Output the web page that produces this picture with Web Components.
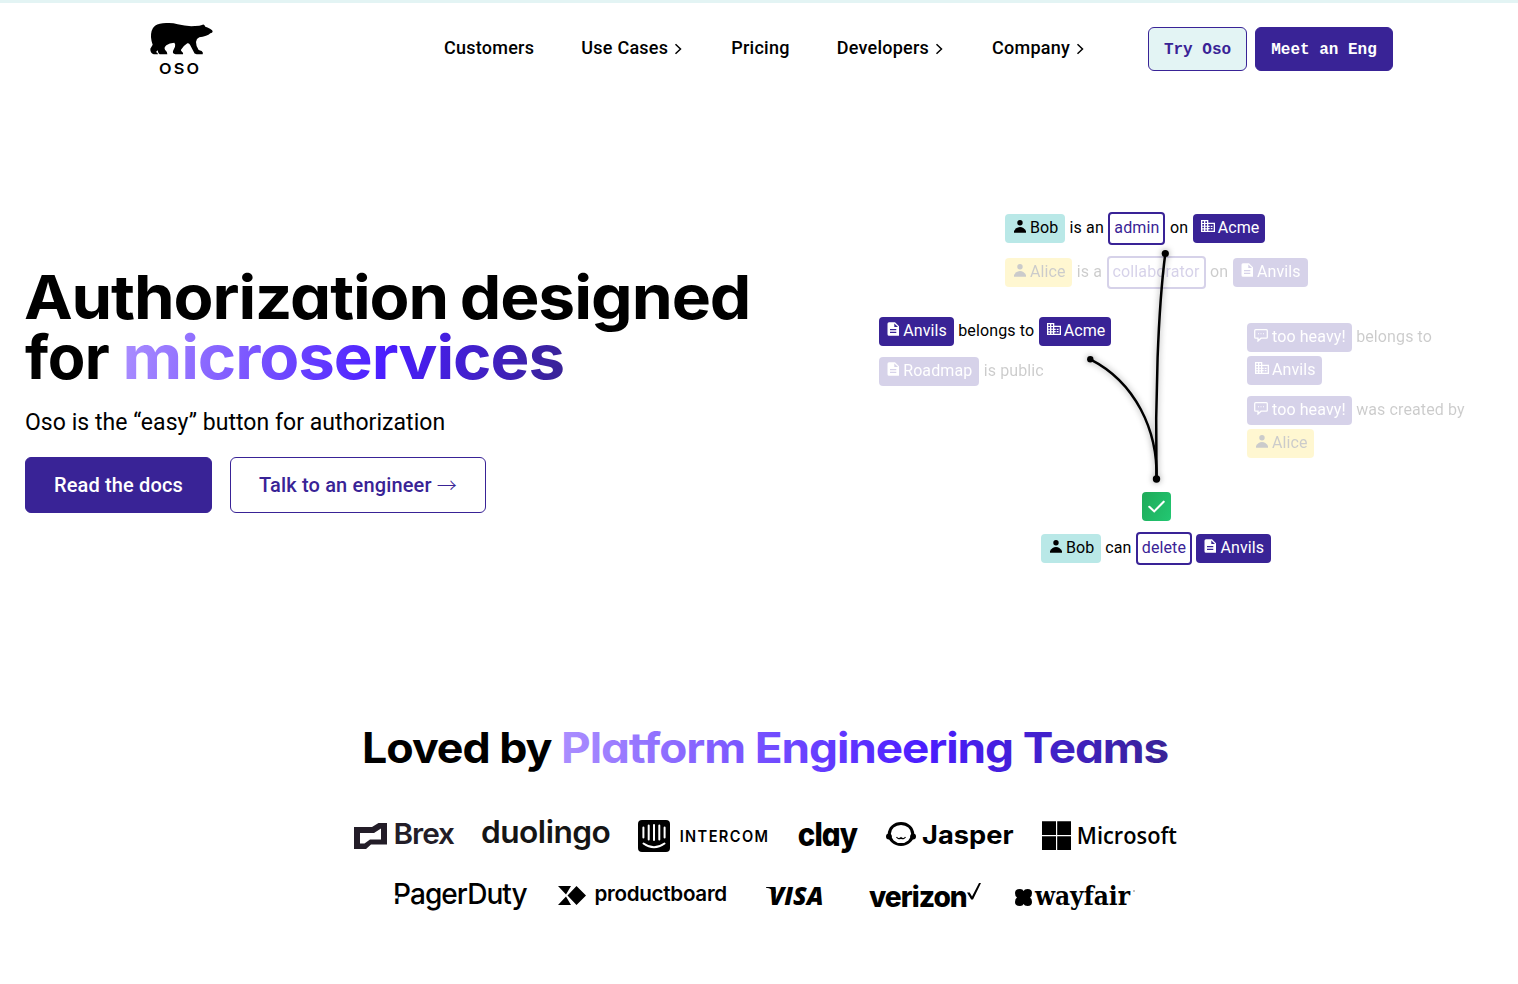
<!DOCTYPE html>
<html lang="en">
<head>
<meta charset="utf-8">
<title>Oso</title>
<style>
body{margin:0;background:#fff;font-family:Roboto,sans-serif;color:#000;height:984px;overflow:hidden}
</style>
</head>
<body>
<oso-page></oso-page>
<script>
const def=(name,html,ready)=>{
  const t=document.createElement('template');t.innerHTML=html;
  customElements.define(name,class extends HTMLElement{
    constructor(){super();this.attachShadow({mode:'open'}).append(t.content.cloneNode(true));}
    connectedCallback(){ready&&ready(this,this.shadowRoot);}
  });
};

// One line of display type whose ink spans exactly `w` pixels, with its baseline at `b`.
customElements.define('fit-text',class extends HTMLElement{
  constructor(){super();this.attachShadow({mode:'open'});}
  connectedCallback(){
    const a=(k,d)=>this.getAttribute(k)||d;
    const w=+a('w'),h=+a('h','40'),b=+a('b'),dx=+a('dx','0'),size=+a('size'),weight=a('weight','700'),ls=a('ls','0'),
      fam=a('font','Inter'),style=a('fstyle','normal'),text=a('text','');
    const g=this.hasAttribute('gradient');
    this.shadowRoot.innerHTML=`<style>:host{display:block;flex:none;width:${w}px;height:${h}px}svg{display:block;overflow:visible}
    text{font:${style} ${weight} ${size}px "${fam}",sans-serif;letter-spacing:${ls}px;white-space:pre;font-feature-settings:${this.hasAttribute('round')?'"cv11"':'normal'}}</style>
    <svg width="${w}" height="${h}">${g?`<defs><linearGradient id="g" gradientUnits="userSpaceOnUse"><stop offset="0" stop-color="#ab8fff"/><stop offset=".6" stop-color="#4a1dff"/><stop offset="1" stop-color="#392396"/></linearGradient></defs>`:''}
    <text fill="${g?'url(#g)':'currentColor'}"></text></svg>`;
    const t=this.shadowRoot.querySelector('text');t.textContent=text;
    const c=document.createElement('canvas').getContext('2d');
    c.font=`${style} ${weight} ${size}px "${fam}"`;c.letterSpacing=ls+'px';
    const m=c.measureText(text),l=-m.actualBoundingBoxLeft;
    // the alternate single-storey "a" changes the advance, which the canvas does not know
    const extra=(t.getComputedTextLength()||m.width)-m.width;
    const W=m.actualBoundingBoxRight-l+extra,s=w/W;
    t.setAttribute('transform',`translate(${dx-l*s} ${b}) scale(${s} 1)`);
    if(g){const H=size*1.2,q=this.shadowRoot.querySelector('linearGradient'),y=-size*.3;
      q.setAttribute('x1',0);q.setAttribute('x2',W);q.setAttribute('y1',y-H*.5);q.setAttribute('y2',y+H*.5);}
  }
});

def('nav-item',`<style>:host{display:flex;align-items:center;font:500 18px/24px Roboto,sans-serif;letter-spacing:.25px;white-space:nowrap}
svg{display:none;margin:2px 0 0 5px}:host([menu]) svg{display:block}</style>
<slot></slot><svg width="11" height="12" viewBox="0 0 11 12"><path d="M2.500 1.2 7.500 6 2.500 10.8" fill="none" stroke="#000" stroke-width="1.5"/></svg>`);

def('cta-button',`<style>:host{display:flex;box-sizing:border-box;align-items:center;justify-content:center;white-space:pre;border:1px solid #392396;border-radius:6px;background:#392396;color:#fff;font:500 20px/24px Roboto,sans-serif;letter-spacing:.15px;height:56px}
:host([mono]){font:700 16px/20px "Liberation Mono",monospace;letter-spacing:0;height:44px;padding-top:2px}
:host([light]){background:#e3f4f4;color:#392396}:host([outline]){background:#fff;color:#392396}
::slotted(span){font:300 20px/24px "Noto Sans CJK JP",sans-serif}</style><slot></slot>`);

def('site-header',`<style>:host{display:flex;box-sizing:border-box;height:96px;border-top:3px solid #e3f4f4;padding-left:148px}
.logo{width:67px;margin-top:17px;display:flex;flex-direction:column}.logo svg{display:block}
fit-text{margin-left:10.500px}
nav{display:flex;gap:47px;margin:33px 0 0 229px;height:24px;width:704px}
.b{display:flex;gap:8px;margin-top:24px}
</style>
<div class="logo"><svg width="67" height="38" viewBox="24 60 201 114"><path d="M218 95Q217 99 211 100Q206 106 198 107Q188 111 178 112Q169 116 168 126Q168 140 176 150L185 153Q191 158 188 163H170Q162 162 161 155L150 134Q147 128 142 130Q131 137 123 149Q122 152 126 155Q131 159 129 163H106Q97 161 99 153L105 140Q107 133 103 128Q88 128 79 136Q71 143 75 149Q83 156 82 163H59Q54 160 53 151L48 156Q54 158 54 163H41Q30 158 31 146L38 134Q34 125 33 112Q32 88 45 77Q60 67 87 69Q101 69 113 73Q140 80 165 78Q180 78 186 75Q192 71 196 80Q202 81 210 86Q219 90 218 95Z"/></svg>
<fit-text text="OSO" w="39.500" h="20" b="15.500" size="15" weight="600" ls="2"></fit-text></div>
<nav><nav-item>Customers</nav-item><nav-item menu>Use Cases</nav-item><nav-item>Pricing</nav-item><nav-item menu>Developers</nav-item><nav-item menu>Company</nav-item></nav>
<div class="b"><cta-button mono light style="width:99px">Try Oso</cta-button><cta-button mono style="width:138px">Meet an Eng</cta-button></div>`);

const icons={
 user:'<circle cx="7" cy="3.7" r="2.7"/><path d="M1 13.7V12Q3.400 8 7 8T13 12V13.700Z"/>',
 doc:'<path fill-rule="evenodd" d="M3 0.3H9L13 4.3V13.7H3Q1.5 13.7 1.5 12.2V1.8Q1.5 .3 3 .3ZM8.3 1.4V5H12ZM4 7V8.2H10.3V7ZM4 9.8V11H10.3V9.8Z"/>',
 org:'<path fill-rule="evenodd" d="M0 1H7.3V3.8H14V13H0ZM1.3 2.3V4H3V2.3ZM4.3 2.3V4H6V2.3ZM1.3 5.1V6.7H3V5.1ZM4.3 5.1V6.7H6V5.1ZM1.3 7.8V9.3H3V7.8ZM4.3 7.8V9.3H6V7.8ZM1.3 10.4V11.8H3V10.4ZM4.3 10.4V11.8H6V10.4ZM7.3 5.1V6.7H8.7V7.9H7.3V9H8.7V10.2H7.3V11.8H12.7V5.1ZM9.7 6.7H11.5V7.9H9.7ZM9.7 9H11.5V10.2H9.7Z"/>',
 chat:'<path d="M1.7 1.700H12.300Q13.300 1.700 13.300 2.700V9.200Q13.300 10.200 12.300 10.200H7L4 13V10.200H1.700Q.7 10.200 .7 9.200V2.700Q.7 1.700 1.700 1.700Z" fill="none" stroke="currentColor" stroke-width="1.300"/><path d="M4 5.300H5V6.300H4ZM6.500 5.300H7.500V6.300H6.500ZM9 5.300H10V6.300H9Z"/>'};
def('fact-pill',`<style>:host{display:flex;box-sizing:border-box;height:29px;padding:4px 6px 6px 7px;border-radius:4px;background:#392396;color:#fff;font:400 16px/19px Roboto,sans-serif;letter-spacing:.1px;white-space:nowrap}
:host([icon=user]){background:#b9e8e7;color:#000;padding-right:6.7px}:host([icon=user][alt]){background:#ffd91e}
:host([icon=doc]){padding-right:6.900px}
:host([role]){height:33px;padding:4px 4px 6px;border:2px solid #392396;background:#fff;color:#392396;letter-spacing:.12px}
svg{width:14px;height:14px;margin:1px 3px 0 1px;fill:currentColor}
:host([icon=user]) svg{margin-right:3px}:host([icon=doc]) svg{margin:1px 3.200px 0 0}:host([icon=chat]) svg{margin:1px 4px 0 0}:host([role]) svg{display:none}
</style><svg viewBox="0 0 14 14"></svg><slot></slot>`,(e,r)=>{r.querySelector('svg').innerHTML=icons[e.getAttribute('icon')]||''});

def('fact-row',`<style>:host{display:flex;flex-wrap:wrap;align-items:center;gap:4px 4.5px;font:400 16px/19px Roboto,sans-serif;letter-spacing:.12px;white-space:nowrap}
:host([dim]){opacity:.2}::slotted(span){padding:4px 0 6px}</style><slot></slot>`);

def('fact-graph',`<style>:host{display:block;position:relative;width:759px;height:480px}
.g{position:absolute;display:flex;flex-direction:column;gap:11px}
svg{position:absolute;left:0;top:0;overflow:visible}
.ok{position:absolute;left:383px;top:396px;width:29px;height:29px;border-radius:4px;background:linear-gradient(120deg,#1faa59,#22c772)}</style>
<div class="g" style="left:246px;top:116px"><fact-row><fact-pill icon="user">Bob</fact-pill><span>is an</span><fact-pill role="x">admin</fact-pill><span>on</span><fact-pill icon="org">Acme</fact-pill></fact-row>
<fact-row dim><fact-pill icon="user" alt>Alice</fact-pill><span>is a</span><fact-pill role="x">collaborator</fact-pill><span>on</span><fact-pill icon="doc">Anvils</fact-pill></fact-row></div>
<div class="g" style="left:120px;top:221px"><fact-row><fact-pill icon="doc">Anvils</fact-pill><span>belongs to</span><fact-pill icon="org">Acme</fact-pill></fact-row>
<fact-row dim><fact-pill icon="doc">Roadmap</fact-pill><span>is public</span></fact-row></div>
<div class="g" style="left:488px;top:227px;width:230px"><fact-row dim><fact-pill icon="chat">too heavy!</fact-pill><span>belongs to</span><fact-pill icon="org">Anvils</fact-pill></fact-row>
<fact-row dim><fact-pill icon="chat">too heavy!</fact-pill><span>was created by</span><fact-pill icon="user" alt>Alice</fact-pill></fact-row></div>
<div class="g" style="left:282px;top:436px"><fact-row style="column-gap:4.200px"><fact-pill icon="user">Bob</fact-pill><span>can</span><fact-pill role="x">delete</fact-pill><fact-pill icon="doc">Anvils</fact-pill></fact-row></div>
<svg width="759" height="480" style="filter:drop-shadow(0 0 3px rgba(0,0,0,.4))"><g fill="none" stroke="#000" stroke-width="2.5"><path d="M406.3 157.5C399 214 396 304 397.5 383"/><path d="M331.3 263.3C376 286 399 334 397.5 383"/></g><circle cx="406.3" cy="157.5" r="3.6"/><circle cx="331.3" cy="263.3" r="3.2"/><circle cx="397.5" cy="383" r="3.7"/></svg>
<div class="ok"><svg width="29" height="29"><path d="M7.3 14.8 12.2 19.4 21.7 9.7" fill="none" stroke="#fff" stroke-width="2.1" stroke-linecap="round"/></svg></div>`);

def('hero-copy',`<style>:host{display:block;width:734px;padding:171px 0 0 25px;box-sizing:border-box}
h1{margin:0}.l{display:flex;gap:15px;height:60px}
p{margin:21px 0 0;font:400 23px/30px Roboto,sans-serif;height:30px;width:500px;letter-spacing:.05px}
.b{display:flex;gap:18px;margin-top:19px}</style>
<h1><div class="l"><fit-text round text="Authorization" w="421" h="60" b="52" size="61" ls="-1"></fit-text><fit-text round text="designed" w="286" dx=".8" h="60" b="52" size="61" ls="-1"></fit-text></div>
<div class="l"><fit-text round text="for" w="84" h="60" b="52" size="61" ls="-.5"></fit-text><fit-text round gradient text="microservices" w="437" dx="1.800" h="60" b="52" size="61" ls="-1"></fit-text></div></h1>
<p>Oso is the “easy” button for authorization</p>
<div class="b"><cta-button style="width:187px">Read the docs</cta-button><cta-button outline style="width:256px">Talk to an engineer <span>→</span></cta-button></div>`);

def('brand-logo',`<style>:host{display:flex;flex:none;height:40px}::slotted(svg){display:block;flex:none;overflow:visible}</style><slot></slot>`);

def('customer-logos',`<style>:host{display:block;padding-top:144px}
h2{margin:0 0 0 363px;display:flex;gap:11px;height:60px}
.r{display:flex}.r1{margin:35px 0 0 354px}.r2{margin:22px 0 0 394px}</style>
<h2><fit-text round text="Loved by" w="188" dx="1.200" h="60" b="43" size="42" ls="-1"></fit-text><fit-text round gradient text="Platform Engineering Teams" w="604.500" dx="1.200" h="60" b="43" size="42" ls="-1"></fit-text></h2>
<div class="r r1">
<brand-logo style="color:#231d28"><svg width="41" height="40"><path fill="#231d28" fill-rule="evenodd" d="M0 12H18L24.500 8H33V29.500H17L12 34H0ZM6 18V28.500H10.500L16 24.500H27V13.500L20 18Z"/></svg><fit-text text="Brex" w="59" dx=".5" b="29" size="29" weight="600" ls="-1"></fit-text></brand-logo>
<brand-logo style="margin-left:28px;color:#151515"><fit-text round text="duolingo" w="128" b="28" size="31" weight="600" ls="-.5"></fit-text></brand-logo>
<brand-logo style="margin-left:28px"><svg width="42" height="40"><rect y="5" width="32" height="32" rx="4"/><g fill="none" stroke="#fff" stroke-width="2" stroke-linecap="round"><path d="M5.4 12.5V22.5M10.7 10.5V24.5M16 10V25M21.3 10.5V24.5M26.6 12.5V22.5M5.5 28.5Q16 36 26.5 28.5"/></g></svg><fit-text text="INTERCOM" w="87" dx=".6" b="26.7" size="15.7" weight="600" ls="1.5"></fit-text></brand-logo>
<brand-logo style="margin-left:31px"><fit-text round text="clay" w="60" dx=".6" b="30.5" size="33" weight="800" ls="-1"></fit-text></brand-logo>
<brand-logo style="margin-left:28px"><svg width="36" height="40"><ellipse cx="15" cy="19" rx="11.700" ry="10.600" fill="none" stroke="#000" stroke-width="3"/><circle cx="2.900" cy="21.500" r="2.900"/><circle cx="27.100" cy="21.500" r="2.900"/><path d="M10.500 22Q12.500 25 15 22.700Q17.500 25 19.500 22" fill="none" stroke="#000" stroke-width="1.300"/></svg><fit-text text="Jasper" w="92" b="29" size="26" weight="650"></fit-text></brand-logo>
<brand-logo style="margin-left:28px"><svg width="36" height="40"><path d="M0 6.300H14V20H0ZM15.200 6.300H29V20H15.200ZM0 21.300H14V35H0ZM15.200 21.300H29V35H15.200Z"/></svg><fit-text text="Microsoft" font="Open Sans" w="98" dx=".6" b="28.700" size="24" weight="600"></fit-text></brand-logo>
</div>
<div class="r r2">
<brand-logo><fit-text text="PagerDuty" w="133" dx="1" b="26.700" size="29" weight="450" ls="-1"></fit-text><svg width="4" height="40" style="margin:0 129px 0 -133px"><path fill="#fff" d="M-1 18.500H3.800V21.500H-1Z"/></svg></brand-logo>
<brand-logo style="margin-left:31px"><svg width="37" height="40"><path d="M0 9H13L8 17.500ZM0 28H13L8 19.500ZM18.500 9 28 18.500 18.500 28 9.500 18.500Z"/></svg><fit-text text="productboard" w="131" dx=".5" b="24" size="20.500" weight="600" ls="-.3"></fit-text></brand-logo>
<brand-logo style="margin-left:40px"><svg width="4" height="40"><path d="M0 10H9L10 17Q6 11 0 10.700Z"/></svg><fit-text text="VISA" font="Open Sans" fstyle="italic" w="52" b="27.700" size="24.500" weight="800"></fit-text></brand-logo>
<brand-logo style="margin-left:47px"><fit-text text="verizon" w="98" b="29.700" size="28" weight="800" ls="-1"></fit-text><svg width="14" height="40"><path d="M0 15.500H2.700L5 19.500 12 6H14L6 22.500H4.200Z"/></svg></brand-logo>
<brand-logo style="margin-left:34px"><svg width="19" height="40"><path d="M5 12Q8 12 8.500 14Q9.500 12 12.500 12Q17 12 17 16Q17 19.500 15 20.500Q17 21.500 17 25Q17 29 12.500 29Q9.500 29 8.500 27Q8 29 5 29Q0 29 0 25Q0 21.500 2 20.500Q0 19.500 0 16Q0 12 5 12Z"/></svg><fit-text text="wayfair" font="DejaVu Serif" w="97" b="28" size="26.500" weight="700"></fit-text><svg width="4" height="40"><circle cx="3" cy="14" r=".8" fill="#777"/></svg></brand-logo>
</div>`);

def('oso-page',`<style>:host{display:block;width:1518px}main{display:flex;height:480px}hero-copy{flex:none}fact-graph{flex:none;margin-left:25px}</style>
<site-header></site-header><main><hero-copy></hero-copy><fact-graph></fact-graph></main><customer-logos></customer-logos>`);
</script>
</body>
</html>
